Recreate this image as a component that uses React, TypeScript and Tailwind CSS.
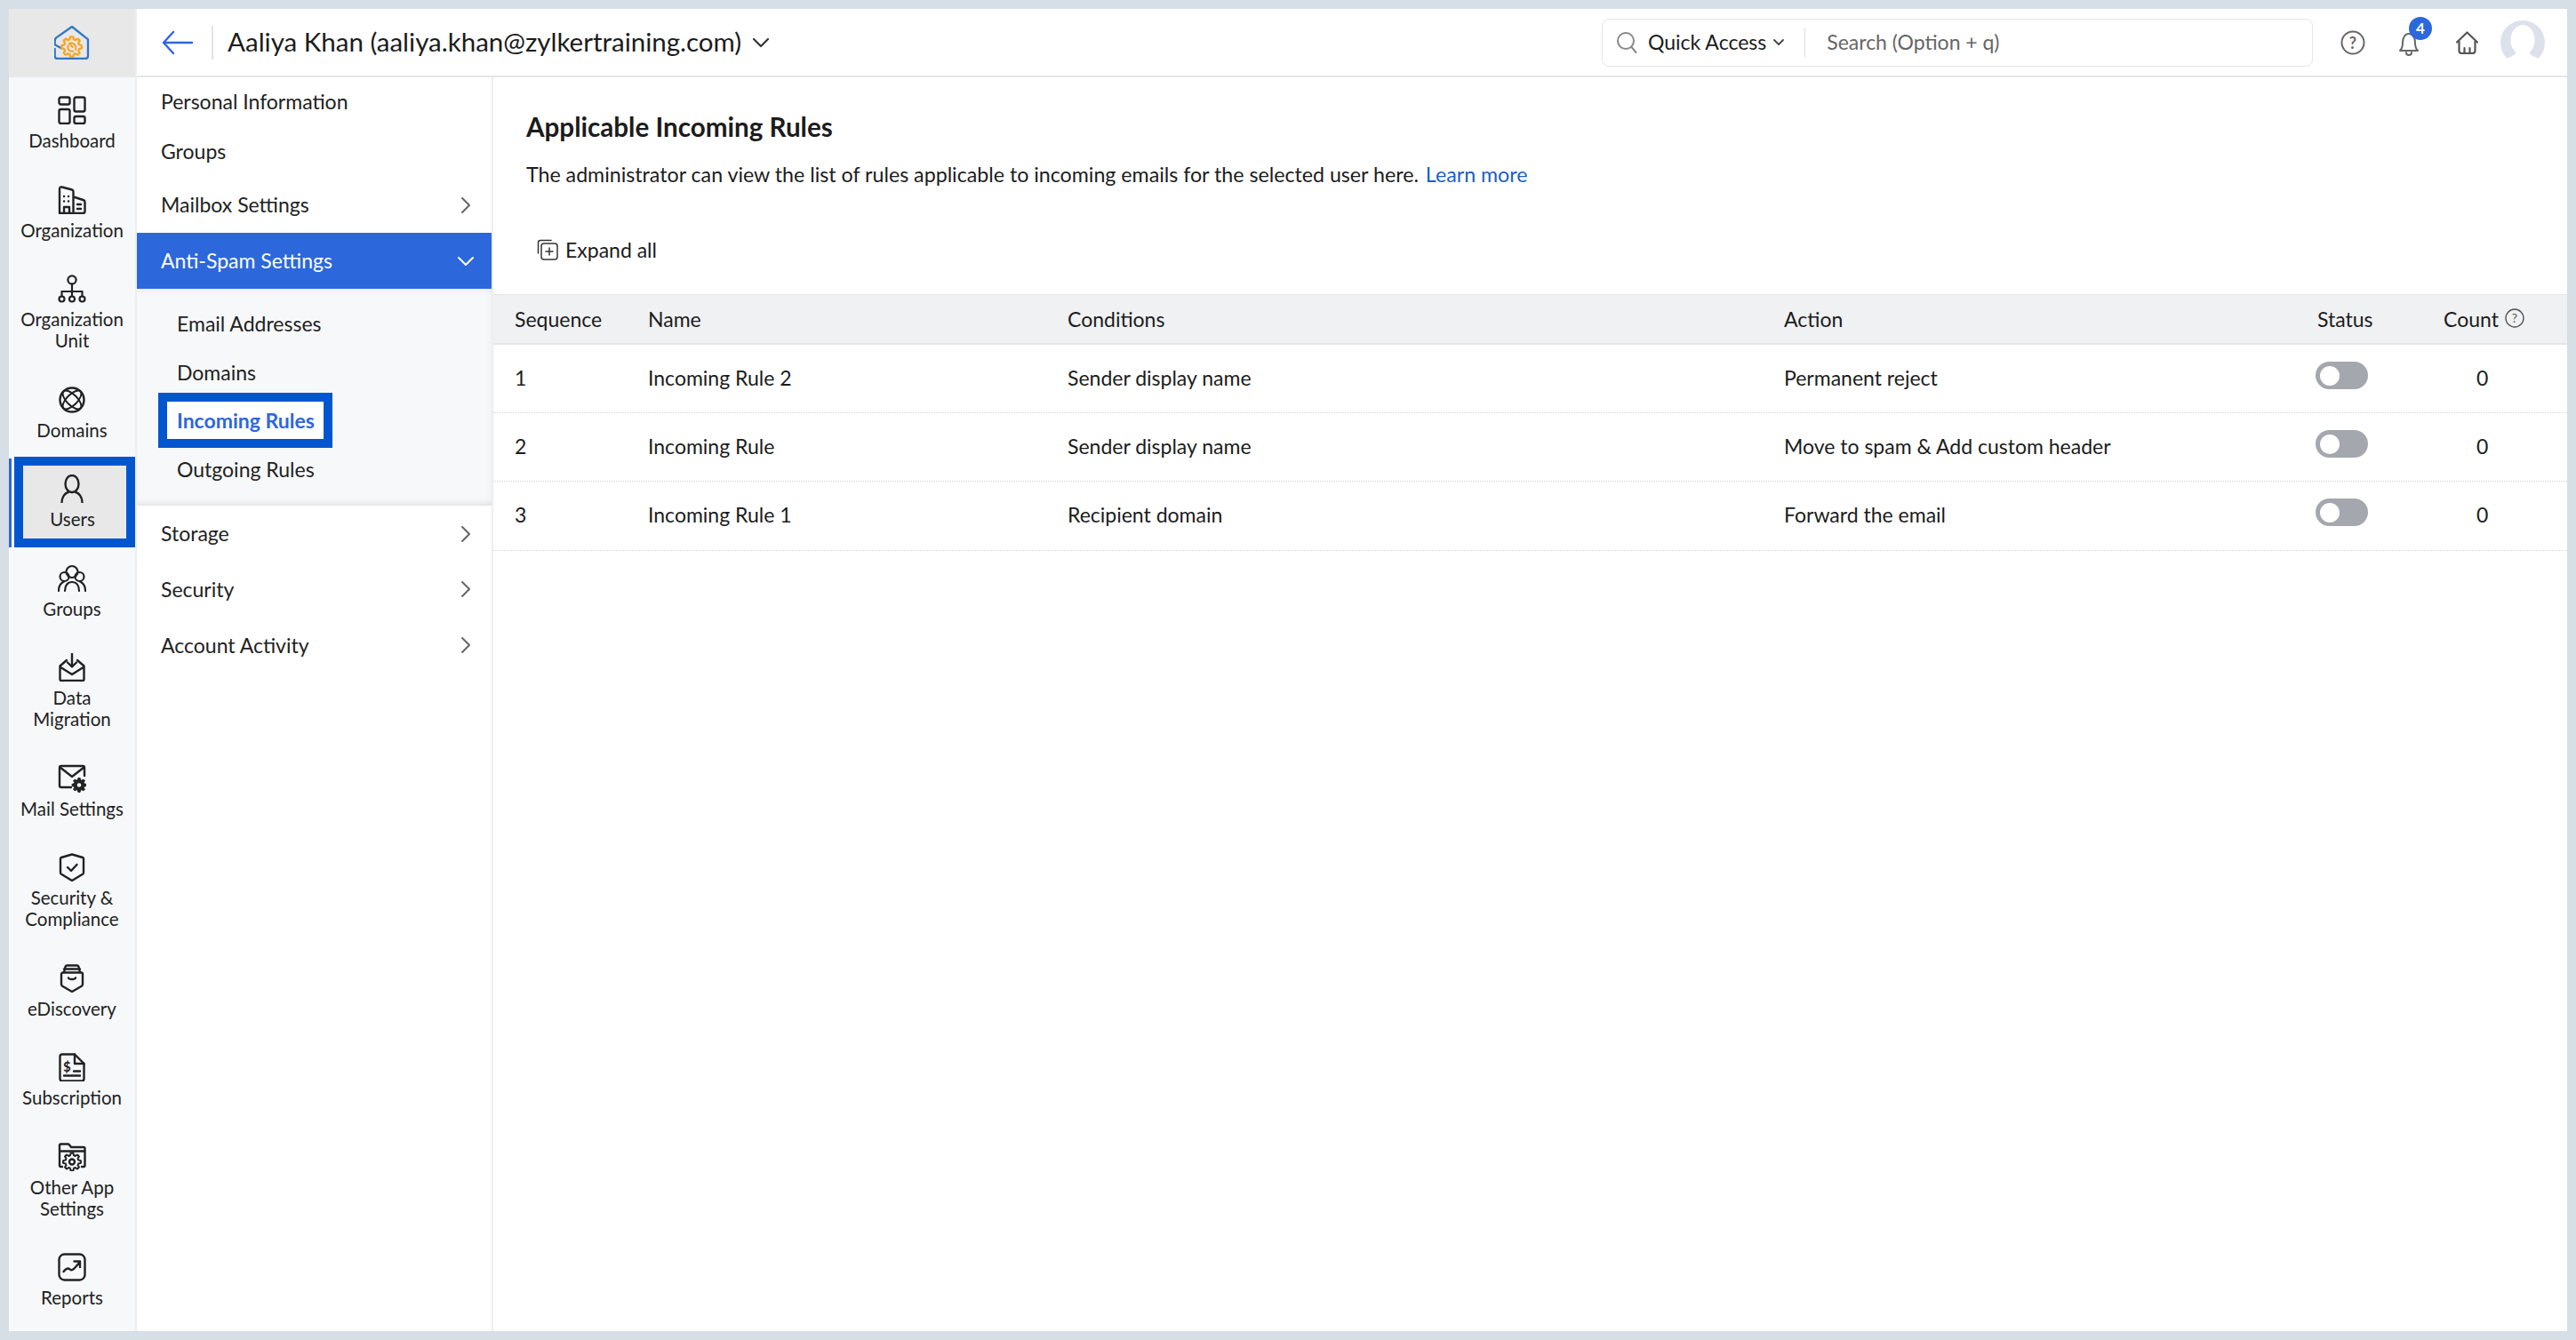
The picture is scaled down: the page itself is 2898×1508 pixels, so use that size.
import React from "react";

const gear = (cx: number, cy: number, r1: number, r2: number, n: number) => {
  const pts: string[] = [];
  for (let i = 0; i < n; i++) {
    const a = (i / n) * Math.PI * 2;
    const w = (Math.PI / n) * 0.5;
    [[-w * 1.4, r1], [-w * 0.7, r2], [w * 0.7, r2], [w * 1.4, r1]].forEach(([d, r]) => {
      pts.push(`${(cx + Math.cos(a + d) * r).toFixed(2)} ${(cy + Math.sin(a + d) * r).toFixed(2)}`);
    });
  }
  return `M${pts.join("L")}Z`;
};

const S = ({ children, w = 32, h = 32, vb = "0 0 32 32", sw = 2.4, c = "#222" }: { children: React.ReactNode; w?: number; h?: number; vb?: string; sw?: number; c?: string }) => (
  <svg width={w} height={h} viewBox={vb} fill="none" stroke={c} strokeWidth={sw} strokeLinecap="round" strokeLinejoin="round">{children}</svg>
);

const icons: Record<string, React.ReactNode> = {
  dashboard: <S><rect x="1.5" y="1.5" width="12" height="8" rx="2" /><rect x="18.5" y="1.5" width="12" height="16" rx="2" /><rect x="1.5" y="15" width="12" height="16" rx="2" /><rect x="18.5" y="23" width="12" height="8" rx="2" /></S>,
  org: <S><path d="M2 31V3.500c0-1.500 1.200-2.400 2.600-2L16 4.500c1 .3 1.500 1 1.500 2V31M17.500 12.500l11 3.500c1.200.4 2 1 2 2.200V29c0 1.200-.8 2-2 2H4c-1.200 0-2-.8-2-2" /><path d="M7 12h.1M12 12h.1M7 17.500h.1M12 17.500h.1M22 21h4M22 26h4" /><path d="M7 31v-7h6v7" /></S>,
  unit: <S sw={2.2}><circle cx="16" cy="6" r="4.600" /><path d="M16 10.600V19M4.500 24.500V19h23v5.500M16 19v5.500" /><circle cx="4.500" cy="27.500" r="3" /><circle cx="16" cy="27.500" r="3" /><circle cx="27.500" cy="27.500" r="3" /></S>,
  domains: <S sw={2.4}><circle cx="16" cy="16" r="13.500" /><ellipse cx="16" cy="16" rx="6" ry="13.500" transform="rotate(45 16 16)" strokeWidth={2} /><ellipse cx="16" cy="16" rx="6" ry="13.500" transform="rotate(-45 16 16)" strokeWidth={2} /></S>,
  users: <S><ellipse cx="16" cy="10.500" rx="7.500" ry="9.500" /><path d="M4.500 31.500c0-6 3.500-10.500 7-11.500M27.500 31.500c0-6-3.500-10.500-7-11.500" /></S>,
  groups: <S sw={2.2}><circle cx="16" cy="8.500" r="6.500" /><circle cx="7.500" cy="14" r="5" /><circle cx="24.500" cy="14" r="5" /><path d="M1 30c0-6 2.500-9 6-10.500M31 30c0-6-2.500-9-6-10.500M8 30c0-6 3-10 8-10s8 4 8 10" /></S>,
  data: <S><path d="M2.500 14.500v15c0 1 .5 1.500 1.500 1.500h24c1 0 1.500-.5 1.500-1.500v-15M2.500 14.500L10 8M29.500 14.500L22 8M2.500 15.500L16 24l13.500-8.500" /><path d="M16 1v14M11 10.500l5 5 5-5" /></S>,
  mail: <S><path d="M15 26H4c-1.200 0-2-.8-2-2V4c0-1.200.8-2 2-2h24c1.200 0 2 .8 2 2v9" /><path d="M2.500 3.500L16 14 29.500 3.500" /><path d={gear(24, 23.500, 6, 8, 8)} fill="#222" strokeWidth={1} /><circle cx="24" cy="23.500" r="2.300" fill="#f7f8fa" stroke="none" /></S>,
  security: <S><path d="M16 1.500L28 5c.6.2 1 .7 1 1.300V22c0 .8-.3 1.300-1 1.800L16 31 4 23.800c-.7-.5-1-1-1-1.800V6.300c0-.6.4-1.100 1-1.300z" /><path d="M11 16l4 4 6.500-7" /></S>,
  ediscovery: <S><path d="M4 11.500v11c0 1 .4 1.600 1.200 2.200L16 31l10.800-6.300c.8-.6 1.200-1.200 1.200-2.200v-11c0-1-.8-2-2-2H6c-1.200 0-2 1-2 2z" /><path d="M7 9l1.500-6c.2-.8.8-1.500 2-1.500h11c1.200 0 1.800.7 2 1.500L25 9M7 5.500h18M12 15.500c.5 2 7.500 2 8 0" /></S>,
  subscription: <S><path d="M19 1.500H5c-1.500 0-2.500 1-2.500 2.500v25c0 1.500 1 2.500 2.500 2.500h22c1.500 0 2.500-1 2.500-2.500V12z" /><path d="M19 1.500V12h10.500" /><path d="M7 25.500h18M18 20.500h7" /><text x="6" y="21" fontSize="15" fontWeight="700" fill="#222" stroke="none" fontFamily="Lato">$</text></S>,
  other: <S><path d="M5 27H3.500c-1 0-1.500-.5-1.500-1.500V3c0-1 .5-1.500 1.500-1.500h8c.6 0 1 .2 1.400.7L15 5h14c1 0 1.500.5 1.500 1.500v19c0 1-.5 1.500-1.500 1.500h-2M2 9.500h28.500" /><path d={gear(16, 21.500, 7.500, 10, 8)} fill="#f7f8fa" strokeWidth={2} /><circle cx="16" cy="21.500" r="3" /></S>,
  reports: <S><rect x="1.500" y="1.500" width="29" height="29" rx="6" /><path d="M6.500 21c2-2.500 3.500-3.500 5-3.500 2 0 3 2.500 5 1.500 2.500-1.200 5-5 8-8.500M18.500 9.500h6.500V16" /></S>,
};

const Chevron = ({ down, c = "#666" }: { down?: boolean; c?: string }) => (
  <svg width="16" height="20" viewBox="0 0 16 20" fill="none" stroke={c} strokeWidth="2" strokeLinecap="round" strokeLinejoin="round" className={down ? "rotate-90" : ""}>
    <path d="M4 2l8 8-8 8" />
  </svg>
);

const nav: { k: string; label: string[] }[] = [
  { k: "dashboard", label: ["Dashboard"] },
  { k: "org", label: ["Organization"] },
  { k: "unit", label: ["Organization", "Unit"] },
  { k: "domains", label: ["Domains"] },
  { k: "users", label: ["Users"] },
  { k: "groups", label: ["Groups"] },
  { k: "data", label: ["Data", "Migration"] },
  { k: "mail", label: ["Mail Settings"] },
  { k: "security", label: ["Security &", "Compliance"] },
  { k: "ediscovery", label: ["eDiscovery"] },
  { k: "subscription", label: ["Subscription"] },
  { k: "other", label: ["Other App", "Settings"] },
  { k: "reports", label: ["Reports"] },
];

const NavBody = ({ k, label }: { k: string; label: string[] }) => (
  <div className="flex flex-col items-center">
    <div className="h-8 w-8">{icons[k]}</div>
    <div className="mt-[6px] text-center text-[20.5px] leading-[24px] text-[#222]">
      {label.map((l) => <div key={l} className="whitespace-nowrap">{l}</div>)}
    </div>
  </div>
);

const NavItem = ({ k, label }: { k: string; label: string[] }) => {
  const dbl = label.length > 1;
  if (k === "users")
    return (
      <div className="relative flex h-[100.5px] items-center pl-[6px]">
        <div className="absolute left-0 top-[1px] bottom-0 w-[3px] bg-[#2d67dc]" />
        <div className="flex h-[102px] w-[136px] shrink-0 items-center justify-center border-[10px] border-[#0156cf] bg-[#e8e8e8] pr-[5px]">
          <NavBody k={k} label={label} />
        </div>
      </div>
    );
  return (
    <div className={`flex justify-center pt-[19px] ${dbl ? "h-[124.5px]" : "h-[100.5px]"}`}>
      <NavBody k={k} label={label} />
    </div>
  );
};

const MenuRow = ({ label, h, arrow, up }: { label: string; h: string; arrow?: boolean; up?: boolean }) => (
  <div className={`flex items-center justify-between pl-[27px] pr-[21px] text-[23px] text-[#222] ${h} ${up ? "pb-[2px]" : ""}`}>
    <span>{label}</span>
    {arrow && <Chevron />}
  </div>
);

const rows = [
  ["1", "Incoming Rule 2", "Sender display name", "Permanent reject"],
  ["2", "Incoming Rule", "Sender display name", "Move to spam & Add custom header"],
  ["3", "Incoming Rule 1", "Recipient domain", "Forward the email"],
];

const cols = "grid grid-cols-[150px_472px_806px_600px_142px_1fr] pl-[24px] items-center";

export default function App() {
  return (
    <div className="flex h-[1508px] w-[2898px] overflow-hidden bg-[#d6dfe5] p-[10px] font-['Lato',sans-serif]">
      <aside className="flex w-[144px] shrink-0 flex-col border-r-2 border-[#eceef0] bg-[#f7f8fa]">
        <div className="flex h-[77px] shrink-0 items-center justify-center bg-[#e8e8e8] pb-[2px] pr-[1px]">
          <svg width="40" height="38" viewBox="36 24 120 114" fill="none" strokeLinecap="round" strokeLinejoin="round">
            <path d="M38 102V125Q38 135 48 135H140Q150 135 150 125V70L96 27L42 65Q38 69 38 78V88L60 100" stroke="#2f78c4" strokeWidth="7" />
            <path d={gear(95, 95, 26, 34, 8)} stroke="#f5a623" strokeWidth="7" />
            <path d="M108 104C112 88 98 78 86 84L98 96M82 92C80 102 88 112 100 110" stroke="#f5a623" strokeWidth="6.500" />
          </svg>
        </div>
        <div className="pt-[2px]">
          {nav.map((n) => <NavItem key={n.k} k={n.k} label={n.label} />)}
        </div>
      </aside>

      <div className="flex min-w-0 flex-1 flex-col bg-white">
        <header className="flex h-[77px] shrink-0 items-center border-b-2 border-[#e6e6e6] pl-[28px]">
          <svg width="36" height="28" viewBox="0 0 36 28" fill="none" stroke="#2d67dc" strokeWidth="2.400" strokeLinecap="round" strokeLinejoin="round">
            <path d="M34 14H2M13 2L2 14l11 12" />
          </svg>
          <div className="ml-[20px] h-[38px] w-[2px] bg-[#e3e3e3]" />
          <h1 className="ml-[16px] whitespace-nowrap text-[29.5px] font-normal text-[#1c1c1c]">Aaliya Khan (aaliya.khan@zylkertraining.com)</h1>
          <svg className="ml-[12px]" width="20" height="14" viewBox="0 0 20 14" fill="none" stroke="#333" strokeWidth="2.200" strokeLinecap="round" strokeLinejoin="round"><path d="M2 3l8 8 8-8" /></svg>

          <div className="ml-auto flex h-[54px] w-[800px] items-center rounded-[8px] border border-[#e6e6e6] pl-[15px]">
            <svg width="24" height="26" viewBox="0 0 24 26" fill="none" stroke="#888" strokeWidth="2"><circle cx="11" cy="11" r="9" /><path d="M17.500 18l5 6" strokeLinecap="round" /></svg>
            <span className="ml-[12px] text-[23px] text-[#1c1c1c]">Quick Access</span>
            <svg className="ml-[7px]" width="14" height="10" viewBox="0 0 14 10" fill="none" stroke="#444" strokeWidth="1.800" strokeLinecap="round" strokeLinejoin="round"><path d="M2 2l5 5 5-5" /></svg>
            <div className="ml-[22px] h-[34px] w-[1px] bg-[#e0e0e0]" />
            <span className="ml-[24px] text-[23px] text-[#666]">Search (Option + q)</span>
          </div>

          <div className="ml-[31px] flex h-[28px] w-[28px] items-center justify-center">
            <svg width="28" height="28" viewBox="0 0 28 28" fill="none" stroke="#666" strokeWidth="2"><circle cx="14" cy="14" r="12.500" /><text x="14" y="20.500" textAnchor="middle" fontSize="18" fontWeight="700" fill="#666" stroke="none" fontFamily="Lato">?</text></svg>
          </div>
          <div className="relative ml-[36px] h-[34px] w-[26px]">
            <svg width="26" height="34" viewBox="0 0 26 34" fill="none" stroke="#666" strokeWidth="2" strokeLinecap="round" strokeLinejoin="round"><path d="M3 26c2-2 3-4 3-9 0-6 3-10 7-10s7 4 7 10c0 5 1 7 3 9zM10 28c0 4 6 4 6 0" /></svg>
            <div className="absolute left-[13px] top-[-12px] flex h-[26px] w-[26px] items-center justify-center rounded-full bg-[#2d67dc] text-[17px] font-bold text-white">4</div>
          </div>
          <div className="ml-[40px]">
            <svg width="25" height="26" viewBox="0 0 25 26" fill="none" stroke="#555" strokeWidth="2.200" strokeLinecap="round" strokeLinejoin="round"><path d="M1 12.500L12.500 1.500 24 12.500M3.500 11v11c0 2 1 3 3 3h12c2 0 3-1 3-3V11M9.500 25v-6M15.500 25v-6" /></svg>
          </div>
          <div className="ml-[25px] mr-[25px]">
            <svg width="50" height="50" viewBox="0 0 50 50">
              <circle cx="25" cy="25" r="25" fill="#dde1ec" />
              <ellipse cx="25" cy="22" rx="13.500" ry="17" fill="#fff" />
              <path d="M6 43Q18 40 19 33H31Q32 40 44 43L42 50H8Z" fill="#fff" />
            </svg>
          </div>
        </header>

        <div className="flex min-h-0 flex-1">
          <nav className="w-[401px] shrink-0 border-r-2 border-[#eceef0] bg-white">
            <MenuRow label="Personal Information" h="h-[56px]" up />
            <MenuRow label="Groups" h="h-[56px]" up />
            <MenuRow label="Mailbox Settings" h="h-[63px]" arrow />
            <div className="flex h-[63px] items-center justify-between bg-[#2d67dc] pl-[27px] pr-[21px] text-[23px] text-white">
              <span>Anti-Spam Settings</span>
              <Chevron down c="#fff" />
            </div>
            <div className="bg-[#f7f8fa] pb-[14px] pt-[12px] text-[23px] text-[#222] shadow-[inset_0_8px_8px_-8px_rgba(0,0,0,0.08),inset_0_-10px_8px_-8px_rgba(0,0,0,0.1),inset_-6px_0_8px_-6px_rgba(0,0,0,0.05)]">
              <div className="flex h-[54.500px] items-center pl-[45px]">Email Addresses</div>
              <div className="flex h-[54.500px] items-center pl-[45px]">Domains</div>
              <div className="flex h-[54.500px] items-center pl-[24px]">
                <div className="flex h-[62px] w-[196px] shrink-0 items-center border-[10px] border-[#0156cf] bg-white pl-[11px] font-bold text-[#2d67dc]">Incoming Rules</div>
              </div>
              <div className="flex h-[54.500px] items-center pl-[45px]">Outgoing Rules</div>
            </div>
            <MenuRow label="Storage" h="h-[63px]" arrow />
            <MenuRow label="Security" h="h-[62.500px]" arrow />
            <MenuRow label="Account Activity" h="h-[63px]" arrow />
          </nav>

          <main className="min-w-0 flex-1 text-[#1c1c1c]">
            <div className="pl-[37px] pt-[37px]">
              <h2 className="text-[29.6px] font-bold leading-[38px]">Applicable Incoming Rules</h2>
              <p className="mt-[20px] text-[23.2px] leading-[28px]">
                The administrator can view the list of rules applicable to incoming emails for the selected user here.
                <a className="ml-[8px] text-[#1a5fc4]">Learn more</a>
              </p>
              <div className="ml-[12px] mt-[56px] flex h-[30px] items-center">
                <svg width="24" height="24" viewBox="0 0 24 24" fill="none" stroke="#333" strokeWidth="1.500" strokeLinecap="round" strokeLinejoin="round"><rect x="5" y="5" width="18" height="18" rx="3" /><path d="M14 10v8M10 14h8M1.500 16V4c0-1.500 1-2.500 2.500-2.500h12" /></svg>
                <span className="ml-[8px] text-[23px]">Expand all</span>
              </div>
            </div>
            <div className={`${cols} mt-[35px] h-[57px] border-t border-b-2 border-t-[#e6e6e6] border-b-[#e4e6e9] bg-[#f0f1f3] text-[23px]`}>
              <span>Sequence</span>
              <span>Name</span>
              <span>Conditions</span>
              <span>Action</span>
              <span>Status</span>
              <span className="flex items-center gap-[7px]">
                Count
                <svg className="-mt-[2px]" width="22" height="22" viewBox="0 0 22 22" fill="none" stroke="#555" strokeWidth="1.400"><circle cx="11" cy="11" r="10" /><text x="11" y="16" textAnchor="middle" fontSize="14" fill="#555" stroke="none" fontFamily="Lato">?</text></svg>
              </span>
            </div>
            {rows.map((r) => (
              <div key={r[0]} className={`${cols} h-[77.200px] border-b border-dotted border-[#d4d4d4] pb-[2px] text-[23px]`}>
                <span>{r[0]}</span>
                <span>{r[1]}</span>
                <span>{r[2]}</span>
                <span>{r[3]}</span>
                <span>
                  <span className="-ml-[2px] -mt-[5px] flex h-[31px] w-[59px] items-center rounded-full bg-[#a4a7ad] pl-[5px]">
                    <span className="h-[22px] w-[22px] rounded-full bg-white" />
                  </span>
                </span>
                <span className="pl-[37px]">0</span>
              </div>
            ))}
          </main>
        </div>
      </div>
    </div>
  );
}
